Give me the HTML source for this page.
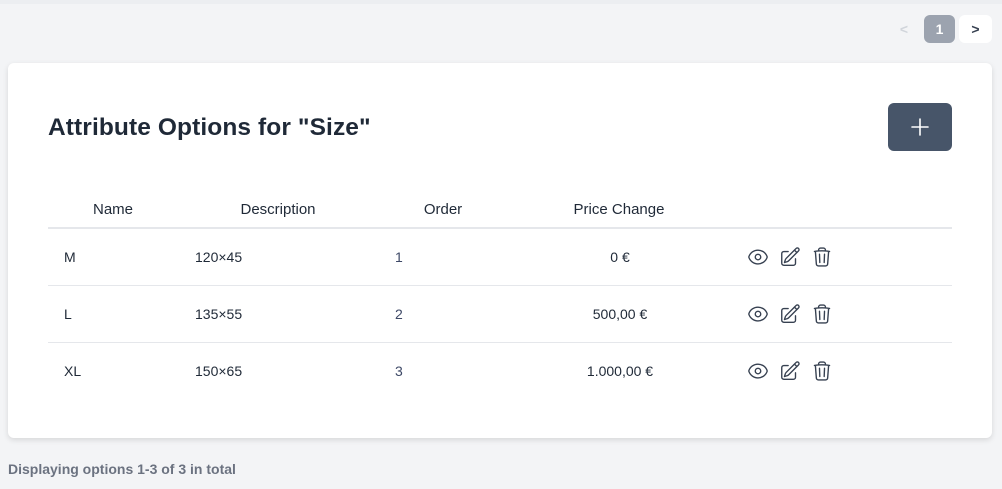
<!DOCTYPE html>
<html><head><meta charset="utf-8"><style>
*{margin:0;padding:0;box-sizing:border-box}
body{width:1002px;height:489px;background:#f3f4f6;font-family:"Liberation Sans",sans-serif;position:relative;overflow:hidden;color:#111827}
.top{position:absolute;left:0;top:0;width:1002px;height:4px;background:#eceef1}
.pg{position:absolute;top:15px;height:28px;border-radius:6px;font-size:14px;font-weight:bold;display:flex;align-items:center;justify-content:center}
.card{position:absolute;left:8px;top:63px;width:984px;height:375px;background:#fff;border-radius:6px;box-shadow:0 2px 6px rgba(0,0,0,.12)}
h1{position:absolute;left:40px;top:51px;font-size:24.5px;font-weight:bold;color:#1f2937;letter-spacing:.1px}
.add{position:absolute;left:880px;top:40px;width:64px;height:48px;background:#475569;border-radius:6px}
.t{position:absolute;font-size:14px;color:#1f2937;white-space:nowrap}
.h{font-size:15px;top:138px}
.c{transform:translateX(-50%)}
.line{position:absolute;left:40px;width:904px;height:1px;background:#e5e7eb}
.o{color:#3d4866}
svg.i{position:absolute;width:22px;height:22px;fill:none;stroke:#374151;stroke-width:1.5;stroke-linecap:round;stroke-linejoin:round}
.foot{position:absolute;left:8px;top:461px;font-size:14px;font-weight:bold;color:#6b7280}
</style></head><body>
<div class="top"></div>
<div class="pg" style="left:892px;width:24px;color:#d1d5db">&lt;</div>
<div class="pg" style="left:924px;width:31px;background:#9ca3af;color:#fff">1</div>
<div class="pg" style="left:959px;width:33px;background:#fff;color:#374151">&gt;</div>
<div class="card">
<h1>Attribute Options for "Size"</h1>
<div class="add"><svg width="64" height="48" viewBox="0 0 64 48"><path d="M32 16v16M24 24h16" stroke="#fff" stroke-width="1.6" stroke-linecap="round"/></svg></div>
<div class="t h c" style="left:105px">Name</div>
<div class="t h c" style="left:270px">Description</div>
<div class="t h c" style="left:435px">Order</div>
<div class="t h c" style="left:611px">Price Change</div>
<div class="line" style="top:164px;height:2px"></div>

<div class="t" style="left:56px;top:186px">M</div>
<div class="t" style="left:187px;top:186px">120×45</div>
<div class="t o" style="left:387px;top:186px">1</div>
<div class="t c" style="left:612px;top:186px">0 €</div>
<div class="line" style="top:222px"></div>

<div class="t" style="left:56px;top:243px">L</div>
<div class="t" style="left:187px;top:243px">135×55</div>
<div class="t o" style="left:387px;top:243px">2</div>
<div class="t c" style="left:612px;top:243px">500,00 €</div>
<div class="line" style="top:279px"></div>

<div class="t" style="left:56px;top:300px">XL</div>
<div class="t" style="left:187px;top:300px">150×65</div>
<div class="t o" style="left:387px;top:300px">3</div>
<div class="t c" style="left:612px;top:300px">1.000,00 €</div>
</div>

<div id="icons"></div>
<script>
var eye='<path d="M2.04 12.32a1 1 0 010-.64C3.42 7.51 7.36 4.5 12 4.5c4.64 0 8.57 3.01 9.960 7.18a1 1 0 010 .64C20.58 16.49 16.64 19.5 12 19.5c-4.64 0-8.57-3.01-9.96-7.18z"/><path d="M15 12a3 3 0 11-6 0 3 3 0 016 0z"/>';
var pen='<path d="M16.86 4.49l1.69-1.69a1.88 1.88 0 112.65 2.650L10.58 16.07a4.5 4.5 0 01-1.9 1.13L6 18l.8-2.68a4.5 4.5 0 011.13-1.9l8.93-8.93zM16.86 4.49L19.5 7.13"/><path d="M18 14v4.75A2.25 2.25 0 0115.75 21H5.25A2.25 2.25 0 013 18.75V8.25A2.25 2.25 0 015.25 6H10"/>';
var tr='<path d="M14.74 9l-.35 9m-4.78 0L9.26 9m9.97-3.21c.34.05.68.11 1.02.17m-1.02-.17L18.16 19.67A2.25 2.25 0 0115.92 21.75H8.08a2.25 2.25 0 01-2.24-2.08L4.77 5.79m14.46 0a48.1 48.1 0 00-3.48-.4m-12 .56c.34-.06.68-.11 1.02-.17m0 0a48.1 48.1 0 013.48-.4m7.5 0v-.92c0-1.18-.91-2.16-2.090-2.2a52 52 0 00-3.32 0c-1.18.04-2.09 1.02-2.09 2.2v.92m7.5 0a48.7 48.7 0 00-7.5 0"/>';
var h='';[257,314,371].forEach(function(y){
h+='<svg class="i" viewBox="0 0 24 24" style="left:747px;top:'+(y-11)+'px">'+eye+'</svg>';
h+='<svg class="i" viewBox="0 0 24 24" style="left:779px;top:'+(y-11)+'px">'+pen+'</svg>';
h+='<svg class="i" viewBox="0 0 24 24" style="left:811px;top:'+(y-11)+'px">'+tr+'</svg>';});
document.getElementById('icons').innerHTML=h;
</script>
<div class="foot">Displaying options 1-3 of 3 in total</div>
</body></html>
